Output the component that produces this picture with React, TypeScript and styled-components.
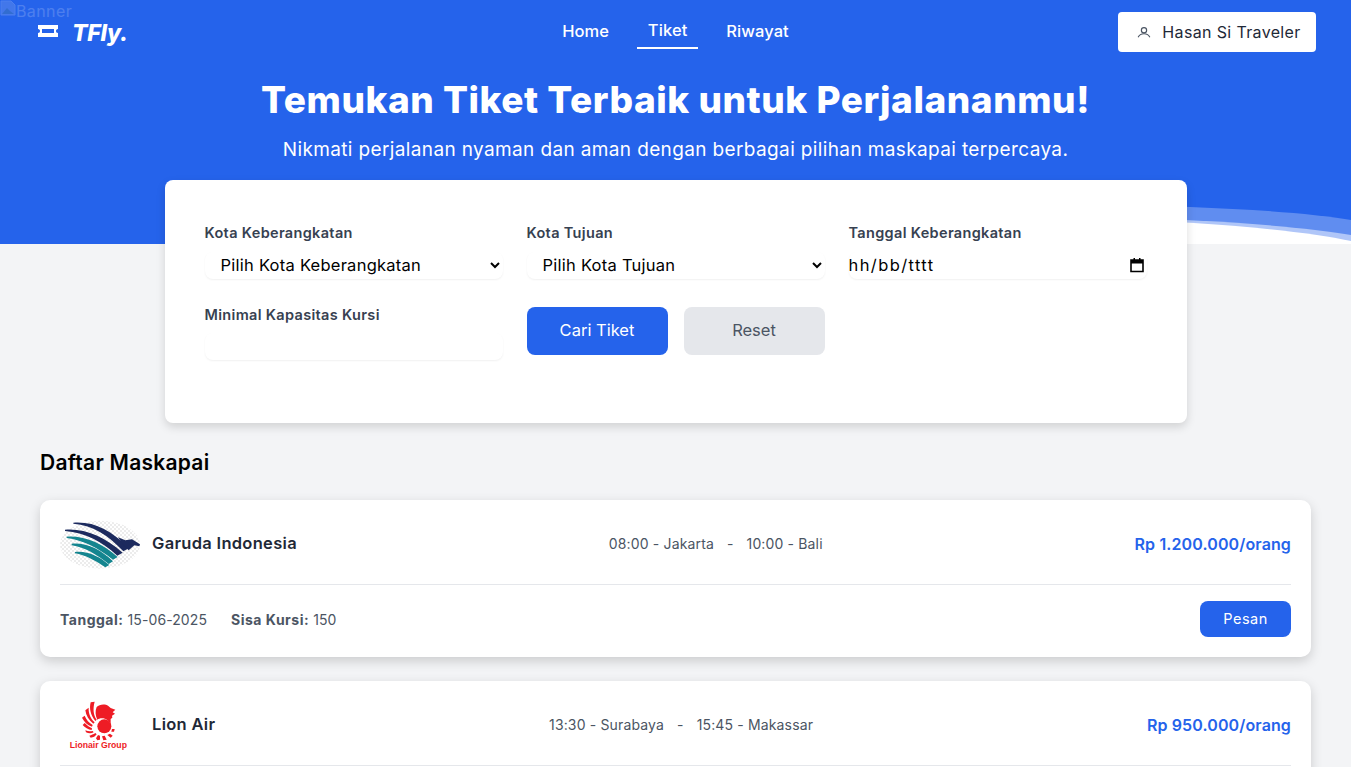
import React from "react";
import styled, { createGlobalStyle } from "styled-components";

const FONT = `"Inter", "Liberation Sans", sans-serif`;

interface Flight {
  name: string;
  logo: React.ReactNode;
  dep: string;
  arr: string;
  price: string;
  date: string;
  seats: number;
}

const GarudaLogo = () => (
  <svg width="80" height="49" viewBox="60 42 240 147">
    <defs>
      <pattern id="chk" width="12" height="12" patternUnits="userSpaceOnUse">
        <rect width="12" height="12" fill="#fff" />
        <rect width="6" height="6" fill="#ececec" />
        <rect x="6" y="6" width="6" height="6" fill="#ececec" />
      </pattern>
    </defs>
    <ellipse cx="180" cy="116" rx="120" ry="72" fill="url(#chk)" />
    <path d="M100 50C165 46 210 72 268 126L250 136C205 88 160 58 100 53Z" fill="#1c2a5e" />
    <path d="M75 71C138 67 192 92 248 140L232 149C185 106 135 80 75 75Z" fill="#1c2a5e" />
    <path d="M80 92C138 89 188 114 233 153L219 161C175 127 130 102 80 96Z" fill="#14858f" />
    <path d="M95 113C143 110 182 131 219 166L206 174C170 146 135 124 95 118Z" fill="#14858f" />
    <path d="M105 138C143 134 177 151 208 177L196 184C165 163 135 147 105 142Z" fill="#14858f" />
    <path d="M234 94L256 103L276 100L300 115L298 121L283 118L266 133L250 116Z" fill="#1c2a5e" />
  </svg>
);

const LionLogo = () => (
  <svg width="80" height="49" viewBox="-30 12 240 147">
    <g fill="#ee1c25">
      <path d="M80 30C88 22 105 20 115 27L122 33L136 38L128 46L135 50L126 56L127 62L122 66L122 84C118 72 108 64 96 64C90 64 85 66 82 68C76 55 75 42 80 30Z" />
      <circle cx="103" cy="88" r="21" />
      <path d="M62 16L74 14C68 35 70 55 80 68L76 72C62 55 57 35 62 16Z" />
      <path d="M46 40L56 32C55 50 62 65 74 76L70 80C56 70 48 55 46 40Z" />
      <path d="M36 62L44 56C48 68 58 78 68 84L66 89C52 84 42 74 36 62Z" />
      <path d="M38 84L44 78C52 86 58 90 66 94L65 99C55 98 44 92 38 84Z" />
      <path d="M48 106L46 100C54 103 60 103 68 102L71 106C64 110 56 110 48 106Z" />
      <path d="M62 122L58 116C64 114 70 112 76 108L80 112C76 118 70 122 62 122Z" />
      <path d="M82 130L78 124L84 114L90 116L90 128Z" />
      <path d="M100 130L96 118L104 116L110 128Z" />
      <path d="M122 122L112 114L120 110L128 116Z" />
      <path d="M132 104L124 104L126 96L134 96Z" />
      <text x="85" y="153" textAnchor="middle" fontFamily="Liberation Sans, sans-serif" fontSize="26" fontWeight="700">
        Lionair Group
      </text>
    </g>
  </svg>
);

const flights: Flight[] = [
  {
    name: "Garuda Indonesia",
    logo: <GarudaLogo />,
    dep: "08:00 - Jakarta",
    arr: "10:00 - Bali",
    price: "Rp 1.200.000/orang",
    date: "15-06-2025",
    seats: 150,
  },
  {
    name: "Lion Air",
    logo: <LionLogo />,
    dep: "13:30 - Surabaya",
    arr: "15:45 - Makassar",
    price: "Rp 950.000/orang",
    date: "20-06-2025",
    seats: 120,
  },
];

const GlobalStyle = createGlobalStyle`
  * { box-sizing: border-box; }
  html, body { margin: 0; padding: 0; }
  body { background: #f3f4f6; font-family: ${FONT}; color: #111827; }
`;

const Hero = styled.header`
  position: relative;
  height: 244px;
  background: #2563eb;
  color: #fff;
  overflow: hidden;
`;

const BrokenBanner = styled.div`
  position: absolute;
  top: 0;
  left: 0;
  display: flex;
  align-items: flex-start;
  font-size: 16px;
  letter-spacing: 0.4px;
  line-height: 22px;
  color: #fff;
  opacity: 0.18;
`;

const Wave = styled.svg`
  position: absolute;
  left: 0;
  bottom: 0;
  width: 100%;
  height: 64px;
`;

const NavBar = styled.nav`
  position: relative;
  height: 62px;
  padding: 0 35px 0 38px;
  display: grid;
  grid-template-columns: 1fr auto 1fr;
  align-items: center;
`;

const Logo = styled.div`
  display: flex;
  align-items: center;
  gap: 14px;
`;

const LogoText = styled.span`
  margin-top: 3px;
  font-size: 23px;
  font-weight: 800;
  font-style: italic;
  letter-spacing: -0.3px;
`;

const NavLinks = styled.div`
  display: flex;
  align-items: flex-start;
  height: 22px;
  gap: 28px;
  margin-right: 3px;
`;

const NavLink = styled.a<{ $active?: boolean }>`
  padding: 0 0 6px;
  margin-top: ${(p) => (p.$active ? "-1px" : "0")};
  min-width: ${(p) => (p.$active ? "61px" : "0")};
  text-align: center;
  font-size: 16.500px;
  letter-spacing: 0.1px;
  font-weight: 500;
  line-height: 22px;
  color: #fff;
  border-bottom: 2px solid ${(p) => (p.$active ? "#fff" : "transparent")};
`;

const UserButton = styled.button`
  justify-self: end;
  width: 198px;
  height: 40px;
  margin-top: 2px;
  padding: 0 0 0 4px;
  display: flex;
  align-items: center;
  justify-content: center;
  gap: 11px;
  border: 0;
  border-radius: 4px;
  background: #fff;
  color: #1f2937;
  font-family: ${FONT};
  font-size: 16px;
  letter-spacing: 0.35px;
  font-weight: 400;
`;

const HeroText = styled.div`
  position: relative;
  text-align: center;
`;

const HeroTitle = styled.h1`
  margin: 13px 0 0;
  font-size: 37px;
  letter-spacing: 0.55px;
  line-height: 50px;
  font-weight: 800;
`;

const HeroSub = styled.p`
  margin: 13px 0 0;
  font-size: 19px;
  letter-spacing: 0.37px;
  line-height: 24px;
  font-weight: 400;
`;

const SearchCard = styled.section`
  position: relative;
  width: 1022px;
  height: 243px;
  margin: -64px auto 0;
  padding: 40px;
  background: #fff;
  border-radius: 8px;
  box-shadow: 0 4px 10px rgba(0, 0, 0, 0.14);
`;

const FormGrid = styled.div`
  display: grid;
  grid-template-columns: repeat(3, 298px);
  column-gap: 24px;
  row-gap: 23px;
`;

const Field = styled.div`
  display: flex;
  flex-direction: column;
`;

const Label = styled.label`
  padding-top: 1px;
  height: 25px;
  font-size: 14.500px;
  letter-spacing: 0.33px;
  line-height: 24px;
  font-weight: 600;
  color: #374151;
`;

const controlBox = `
  width: 100%;
  height: 27px;
  margin-top: 6px;
  border: 0;
  border-radius: 8px;
  background: #fff;
  box-shadow: 0 1px 2px rgba(0, 0, 0, 0.06);
  color: #000;
  font-family: ${FONT};
  font-size: 16.5px;
  letter-spacing: 0.25px;
  outline: none;
`;

const Select = styled.select`
  ${controlBox}
  margin-top: 7px;
  padding: 0 0 2px 12px;
`;

const DateBox = styled.div`
  ${controlBox}
  margin-top: 7px;
  display: flex;
  align-items: center;
  justify-content: space-between;
  padding: 0 2px 1px 0;
  letter-spacing: 1.4px;
`;

const SeatInput = styled.input`
  ${controlBox}
  padding: 0 12px;
`;

const Buttons = styled.div`
  display: grid;
  grid-template-columns: 1fr 1fr;
  gap: 16px;
  padding-top: 5px;
`;

const ActionButton = styled.button<{ $primary?: boolean }>`
  height: 48px;
  padding: 0 0 2px;
  border: 0;
  border-radius: 8px;
  background: ${(p) => (p.$primary ? "#2563eb" : "#e5e7eb")};
  color: ${(p) => (p.$primary ? "#fff" : "#4b5563")};
  font-family: ${FONT};
  font-size: 16.500px;
  font-weight: 400;
`;

const Listing = styled.main`
  padding: 25px 40px 40px;
`;

const ListTitle = styled.h2`
  margin: 0 0 22px;
  font-size: 21px;
  letter-spacing: 0.25px;
  line-height: 30px;
  font-weight: 600;
  color: #000;
`;

const FlightCard = styled.article`
  margin-bottom: 24px;
  padding: 20px;
  background: #fff;
  border-radius: 10px;
  box-shadow: 0 4px 12px rgba(0, 0, 0, 0.17);
`;

const CardTop = styled.div`
  display: flex;
  align-items: center;
  justify-content: space-between;
  height: 65px;
  padding-bottom: 16px;
  border-bottom: 1px solid #e5e7eb;
`;

const Airline = styled.div`
  display: flex;
  align-items: center;
  gap: 12px;
`;

const AirlineLogo = styled.div`
  width: 80px;
  display: flex;
  justify-content: center;
`;

const AirlineName = styled.span`
  margin-top: -2px;
  font-size: 16.500px;
  letter-spacing: 0.3px;
  font-weight: 600;
  color: #1f2937;
`;

const Times = styled.div`
  display: flex;
  gap: 13px;
  margin-top: -1px;
  font-size: 14px;
  letter-spacing: 0.15px;
  font-weight: 400;
  color: #4b5563;
`;

const Price = styled.div`
  margin-top: -1px;
  font-size: 16px;
  letter-spacing: 0.12px;
  font-weight: 600;
  color: #2563eb;
`;

const CardBottom = styled.div`
  display: flex;
  align-items: center;
  justify-content: space-between;
  padding-top: 16px;
`;

const Meta = styled.div`
  display: flex;
  gap: 24px;
  font-size: 14px;
  letter-spacing: 0.1px;
  color: #4b5563;
`;

const MetaKey = styled.strong`
  font-weight: 700;
  letter-spacing: 0.5px;
`;

const OrderButton = styled.button`
  width: 91px;
  height: 36px;
  padding: 0 0 1px;
  border: 0;
  border-radius: 8px;
  background: #2563eb;
  color: #fff;
  font-family: ${FONT};
  font-size: 14.500px;
  letter-spacing: 0.5px;
  font-weight: 400;
`;

const App: React.FC = () => {
  return (
    <>
      <GlobalStyle />
      <Hero>
        <BrokenBanner>
          <svg width="16" height="16" viewBox="0 0 16 16">
            <path d="M1 1H11L15 5V15H1Z" fill="#c3d0e8" stroke="#fff" />
            <path d="M2 14L7 8L10 11L14 14Z" fill="#6f9a5c" />
          </svg>
          Banner
        </BrokenBanner>
        <Wave viewBox="0 0 1351 64" preserveAspectRatio="none">
          <path d="M1100 25C1200 26 1300 31 1351 40V64H1100Z" fill="#ffffff" fillOpacity="0.27" />
          <path d="M1100 37C1200 39 1300 46 1351 55V64H1100Z" fill="#ffffff" fillOpacity="0.5" />
          <path d="M1100 39.500C1200 41 1300 50 1351 61V64H1100Z" fill="#ffffff" />
        </Wave>
        <NavBar>
          <Logo>
            <svg width="20" height="12" viewBox="0 0 20 12">
              <path
                d="M0 0H20V4C18.500 4 18 5 18 6C18 7 18.500 8 20 8V12H0V8C1.500 8 2 7 2 6C2 5 1.500 4 0 4Z"
                fill="#fff"
              />
              <rect x="4" y="4" width="12" height="4" fill="#2563eb" />
            </svg>
            <LogoText>TFly.</LogoText>
          </Logo>
          <NavLinks>
            <NavLink>Home</NavLink>
            <NavLink $active>Tiket</NavLink>
            <NavLink>Riwayat</NavLink>
          </NavLinks>
          <UserButton>
            <svg width="14" height="14" viewBox="0 0 24 24" fill="none" stroke="#4b5563" strokeWidth="2">
              <circle cx="12" cy="9" r="4.500" />
              <path d="M2 21C4 16.500 8 15 12 15C16 15 20 16.500 22 21" />
            </svg>
            Hasan Si Traveler
          </UserButton>
        </NavBar>
        <HeroText>
          <HeroTitle>Temukan Tiket Terbaik untuk Perjalananmu!</HeroTitle>
          <HeroSub>Nikmati perjalanan nyaman dan aman dengan berbagai pilihan maskapai terpercaya.</HeroSub>
        </HeroText>
      </Hero>
      <SearchCard>
        <FormGrid>
          <Field>
            <Label>Kota Keberangkatan</Label>
            <Select>
              <option>Pilih Kota Keberangkatan</option>
            </Select>
          </Field>
          <Field>
            <Label>Kota Tujuan</Label>
            <Select>
              <option>Pilih Kota Tujuan</option>
            </Select>
          </Field>
          <Field>
            <Label>Tanggal Keberangkatan</Label>
            <DateBox>
              hh/bb/tttt
              <svg width="16" height="16" viewBox="0 0 16 16">
                <path d="M2 3H14V14.500H2Z" fill="none" stroke="#000" strokeWidth="1.600" />
                <path d="M2 3H14V6.500H2Z M4.500 1H6V3H4.500Z M10 1H11.500V3H10Z" fill="#000" />
              </svg>
            </DateBox>
          </Field>
          <Field>
            <Label>Minimal Kapasitas Kursi</Label>
            <SeatInput type="number" />
          </Field>
          <Buttons>
            <ActionButton $primary>Cari Tiket</ActionButton>
            <ActionButton>Reset</ActionButton>
          </Buttons>
        </FormGrid>
      </SearchCard>
      <Listing>
        <ListTitle>Daftar Maskapai</ListTitle>
        {flights.map((f) => (
          <FlightCard key={f.name}>
            <CardTop>
              <Airline>
                <AirlineLogo>{f.logo}</AirlineLogo>
                <AirlineName>{f.name}</AirlineName>
              </Airline>
              <Times>
                <span>{f.dep}</span>
                <span>-</span>
                <span>{f.arr}</span>
              </Times>
              <Price>{f.price}</Price>
            </CardTop>
            <CardBottom>
              <Meta>
                <span>
                  <MetaKey>Tanggal:</MetaKey> {f.date}
                </span>
                <span>
                  <MetaKey>Sisa Kursi:</MetaKey> {f.seats}
                </span>
              </Meta>
              <OrderButton>Pesan</OrderButton>
            </CardBottom>
          </FlightCard>
        ))}
      </Listing>
    </>
  );
};

export default App;
